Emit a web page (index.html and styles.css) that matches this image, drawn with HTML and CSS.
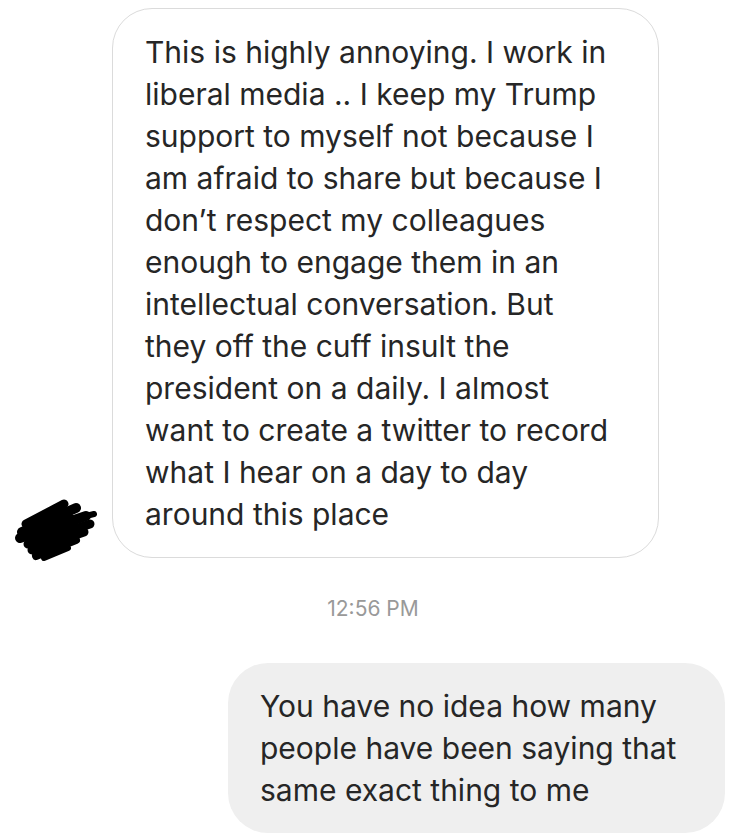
FILE: index.html
```html
<!DOCTYPE html>
<html lang="en">
<head>
    <meta charset="UTF-8">
    <meta name="viewport" content="width=device-width, initial-scale=1.0">
    <title>Direct Messages</title>
    <link rel="stylesheet" href="styles.css">
</head>
<body>
    <div class="thread">
        <div class="msg-row received">
            <div class="avatar">
                <svg width="96" height="80" viewBox="0 0 96 80">
                    <g stroke="#000" stroke-linecap="round" fill="none">
                        <path d="M20 38 L58 18" stroke-width="9"/>
                        <path d="M16 46 L70 22" stroke-width="10"/>
                        <path d="M14 52 L80 30" stroke-width="10"/>
                        <path d="M22 58 L84 38" stroke-width="9"/>
                        <path d="M26 64 L78 46" stroke-width="9"/>
                        <path d="M30 70 L70 54" stroke-width="8"/>
                        <path d="M38 72 L62 62" stroke-width="6"/>
                        <path d="M40 40 L88 28" stroke-width="6"/>
                        <path d="M24 50 L64 34" stroke-width="12"/>
                    </g>
                </svg>
            </div>
            <div class="bubble bubble-in">
                This is highly annoying. I work in liberal media .. I keep my Trump support to myself not because I am afraid to share but because I don’t respect my colleagues enough to engage them in an intellectual conversation. But they off the cuff insult the president on a daily. I almost want to create a twitter to record what I hear on a day to day around this place
            </div>
        </div>

        <div class="timestamp">12:56 PM</div>

        <div class="msg-row sent">
            <div class="bubble bubble-out">
                You have no idea how many people have been saying that same exact thing to me
            </div>
        </div>
    </div>
</body>
</html>
```

FILE: styles.css
```css
body {
    margin: 0;
    background: #fff;
    font-family: Inter, "Noto Sans", sans-serif;
    color: #262626;
}

.thread {
    padding-top: 8px;
}

.msg-row {
    display: flex;
    align-items: flex-end;
}

.msg-row.sent {
    justify-content: flex-end;
    padding-right: 21px;
}

.avatar {
    width: 112px;
    flex-shrink: 0;
    display: flex;
    justify-content: center;
}

.avatar svg {
    display: block;
    margin-bottom: -8px;
    margin-left: -4px;
}

.bubble {
    box-sizing: border-box;
    font-size: 30px;
    line-height: 42px;
    padding: 22px 38px 22px 32px;
    border-radius: 40px;
}

.bubble-in {
    width: 547px;
    border: 1.5px solid #dbdbdb;
    background: #fff;
}

.bubble-out {
    width: 497px;
    padding-left: 32px;
    padding-right: 26px;
    background: #efefef;
}

.timestamp {
    text-align: center;
    color: #999;
    font-size: 21px;
    line-height: 24px;
    margin: 39px 0 42px;
}
```
